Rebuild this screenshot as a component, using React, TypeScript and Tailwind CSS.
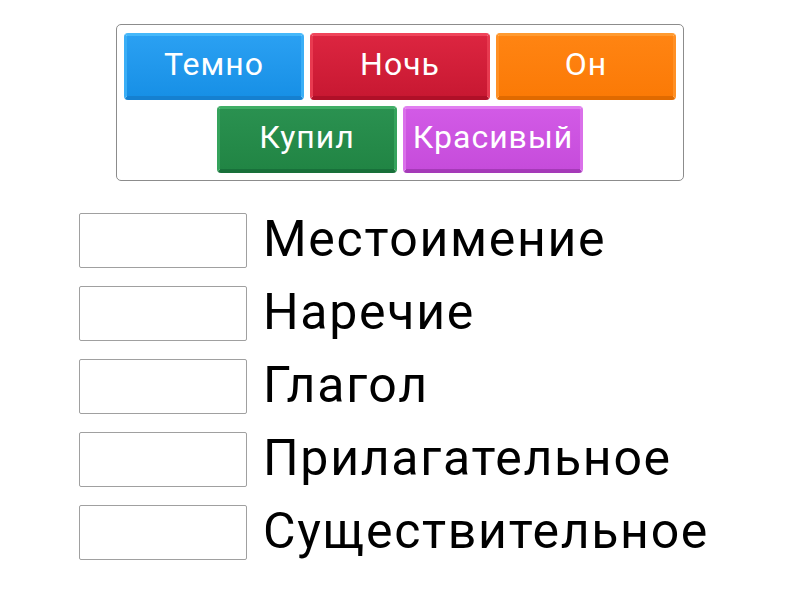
const TILES = [
  { word: 'Темно', cls: 'border-t-[#45b8fa] border-x-[#3aaef6] border-b-[#1580d0] bg-gradient-to-b from-[#2aa0f2] to-[#1790e6]' },
  { word: 'Ночь', cls: 'border-t-[#f0445a] border-x-[#e83a50] border-b-[#b01028] bg-gradient-to-b from-[#dc2540] to-[#c81832]' },
  { word: 'Он', cls: 'border-t-[#ff9a30] border-x-[#ff9025] border-b-[#e06a00] bg-gradient-to-b from-[#ff8412] to-[#fb7a06]' },
  { word: 'Купил', cls: 'border-t-[#3fae66] border-x-[#35a35c] border-b-[#18703a] bg-gradient-to-b from-[#2a9150] to-[#218544]' },
  { word: 'Красивый', cls: 'border-t-[#e17ef0] border-x-[#da70ea] border-b-[#a53ab8] bg-gradient-to-b from-[#d25ae6] to-[#c64cdb]' },
];

const LABELS = ['Местоимение', 'Наречие', 'Глагол', 'Прилагательное', 'Существительное'];

function Tile({ word, cls }: { word: string; cls: string }) {
  return (
    <div
      className={`flex h-[67px] w-[180px] items-center justify-center rounded-[4px] border-t-[3px] border-x-[3px] border-b-[4px] pb-[4px] text-[32px] tracking-[1px] text-white ${cls}`}
    >
      {word}
    </div>
  );
}

export default function App() {
  return (
    <div className="h-[600px] w-[800px] bg-white font-['Roboto','Noto_Sans',sans-serif]">
      <div className="pt-6">
        {/* Word bank */}
        <div className="mx-auto flex w-[568px] flex-wrap justify-center gap-[6px] rounded-[5px] border border-[#8c8c8c] px-[7px] pt-[8px] pb-[7px]">
          {TILES.map((t) => (
            <Tile key={t.word} word={t.word} cls={t.cls} />
          ))}
        </div>

        {/* Drop targets */}
        <div className="mt-[32px] flex flex-col gap-[18px] pl-[79px]">
          {LABELS.map((label) => (
            <div key={label} className="flex items-center gap-[16px]">
              <div className="h-[55px] w-[168px] rounded-[2px] border border-[#a0a0a0] bg-white" />
              <span className="-mt-[4px] text-[50px] leading-none tracking-[1.7px] text-black">{label}</span>
            </div>
          ))}
        </div>
      </div>
    </div>
  );
}
